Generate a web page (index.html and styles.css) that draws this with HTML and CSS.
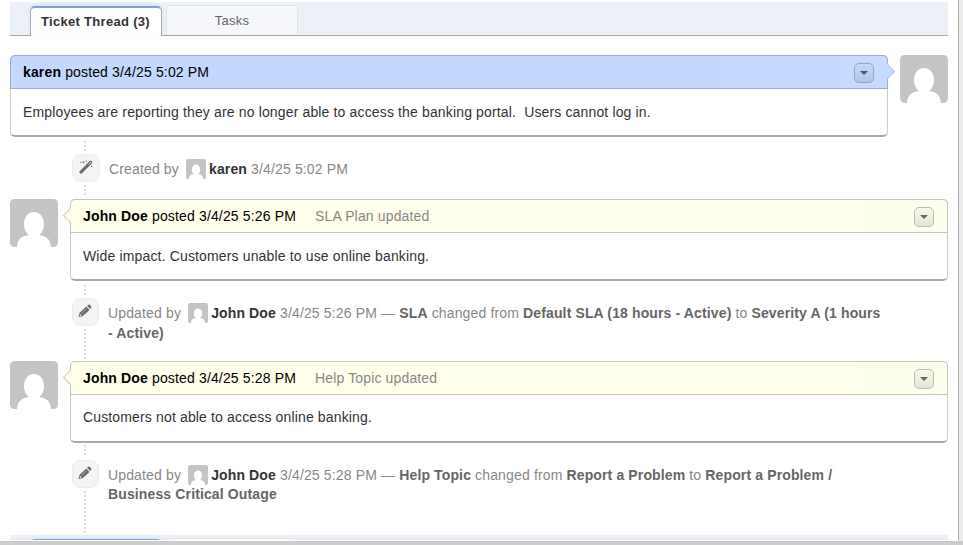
FILE: index.html
```html
<!DOCTYPE html>
<html lang="en">
<head>
<meta charset="utf-8">
<title>Ticket Thread</title>
<link rel="stylesheet" href="styles.css">
</head>
<body>
<svg class="defs" width="0" height="0" aria-hidden="true">
  <symbol id="person" viewBox="0 0 48 48">
    <path fill="#c4c4c4" d="M5 0H43Q48 0 48 5V43Q48 48 43 48H5Q0 48 0 43V5Q0 0 5 0Z"/>
    <path fill="#fff" d="M24 13C30 13 34 18 34 25C34 30 32 34 29 36C36 37 41 40 41 49H7C7 40 12 37 19 36C16 34 14 30 14 25C14 18 18 13 24 13Z"/>
  </symbol>
  <symbol id="pencil" viewBox="0 0 14 14">
    <path fill="#6c6c6c" d="M.5 13L1.6 8.8L8.3 2.5L11.5 5.9L4.6 12.2ZM9.1 1.8L10.4 .8Q11.2 .3 12 1.1L13.1 2.3Q13.8 3.2 13 4L12.2 5Z"/>
    <path stroke="#bbb" stroke-width=".7" d="M3.7 9L8.3 4.8"/>
    <path fill="#f4f4f4" d="M1.7 11.4L2.2 10L3.6 11.4L2.4 11.9Z"/>
  </symbol>
  <symbol id="wand" viewBox="0 0 14 14">
    <path fill="#6c6c6c" d="M0 12L10.7 1.1Q11.5 .4 12.3 1L13.1 1.8Q13.7 2.5 13 3.3L2.2 14Z"/>
    <path stroke="#e4e4e4" stroke-width=".9" d="M9.7 4.3L12 2"/>
    <path fill="#888" d="M1.3 1.7h1.4v1.2H1.3zM6.7 .5h1.3v1.2H6.7zM12 5.7h1.3v1.3H12zM4.5.7l.6 1 1.1.5-1.1.6-.6 1-.6-1-1.1-.6 1.1-.5z"/>
  </symbol>
</svg>
<div class="window">
  <main class="panel">
    <nav class="tabs">
      <div class="tab active">Ticket Thread (3)</div>
      <div class="tab">Tasks</div>
    </nav>
    <div class="thread">
      <article class="entry message">
        <div class="box">
          <header><b>karen</b>&nbsp;posted 3/4/25 5:02 PM<span class="more"></span></header>
          <div class="body">Employees are reporting they are no longer able to access the banking portal.&nbsp; Users cannot log in.</div>
        </div>
        <svg class="avatar"><use href="#person"/></svg>
      </article>
      <div class="event created">
        <div class="rail"><i class="lead"></i><span class="badge"><svg><use href="#wand"/></svg></span><i class="tail"></i></div>
        <p>Created by <svg class="mini"><use href="#person"/></svg><b class="who">karen</b> 3/4/25 5:02 PM</p>
      </div>
      <article class="entry note">
        <svg class="avatar"><use href="#person"/></svg>
        <div class="box">
          <header><b>John Doe</b>&nbsp;posted 3/4/25 5:26 PM<span class="title">SLA Plan updated</span><span class="more"></span></header>
          <div class="body">Wide impact. Customers unable to use online banking.</div>
        </div>
      </article>
      <div class="event sla">
        <div class="rail"><i class="lead"></i><span class="badge"><svg><use href="#pencil"/></svg></span><i class="tail"></i></div>
        <p>Updated by <svg class="mini"><use href="#person"/></svg><b class="who">John Doe</b> 3/4/25 5:26 PM — <b>SLA</b> changed from <b>Default SLA (18 hours - Active)</b> to <b>Severity A (1 hours<br>- Active)</b></p>
      </div>
      <article class="entry note last">
        <svg class="avatar"><use href="#person"/></svg>
        <div class="box">
          <header><b>John Doe</b>&nbsp;posted 3/4/25 5:28 PM<span class="title">Help Topic updated</span><span class="more"></span></header>
          <div class="body">Customers not able to access online banking.</div>
        </div>
      </article>
      <div class="event topic">
        <div class="rail"><i class="lead"></i><span class="badge"><svg><use href="#pencil"/></svg></span><i class="tail"></i></div>
        <p>Updated by <svg class="mini"><use href="#person"/></svg><b class="who">John Doe</b> 3/4/25 5:28 PM — <b>Help Topic</b> changed from <b>Report a Problem</b> to <b>Report a Problem /<br>Business Critical Outage</b></p>
      </div>
    </div>
    <div class="tabs next"><div class="tab active"></div><div class="tab"></div></div>
  </main>
</div>
</body>
</html>
```

FILE: styles.css
```css
* { box-sizing: border-box; }
body { margin: 0; height: 545px; overflow: hidden; background: #ededed; font: 14px/20px "Liberation Sans", Arial, sans-serif; letter-spacing: .147px; color: #333; }
.defs { display: none; }
.window { height: 545px; border-bottom: 4px solid #ccc; overflow: hidden; }
.panel { width: 959px; height: 541px; padding: 2px 10px 0; background: #fff; border-right: 1px solid #aaa; border-bottom: 1px solid #fff; overflow: hidden; }
.tabs { display: flex; gap: 4px; width: 938px; height: 34px; padding: 3px 0 0 20px; background: #ebf1f6; border-bottom: 1px solid #aaa; }
.tab { width: 132px; height: 30px; border: 1px solid #e2e4e8; border-bottom: 0; border-radius: 5px 5px 0 0; background: #f5f7fa; color: #666; font-size: 13px; line-height: 29px; letter-spacing: .3px; text-align: center; }
.tab.active { margin-top: 1px; height: 30px; background: #fff; border-color: #aaa; border-top: 2px solid #7aa3d6; color: #333; font-weight: bold; line-height: 28px; padding-right: 1px; box-shadow: 0 -1px 5px rgba(0,0,0,.06); }
.thread { padding-top: 19px; width: 938px; }
.entry { display: flex; gap: 12px; height: 82px; }
.avatar { width: 48px; height: 48px; flex: none; }
.box { position: relative; width: 878px; height: 82px; border: 1px solid #ccc; border-bottom: 2px solid #aaa; border-radius: 5px; background: #fff; }
.box header { display: flex; align-items: center; height: 34px; margin: -1px -1px 0; padding: 0 12px; border: 1px solid #c8c8b8; border-radius: 5px 5px 0 0; background: linear-gradient(90deg, #ffffeb 85%, #fdfdee); color: #000; }
.message .box header { background: linear-gradient(90deg, #c3d7ff 75%, #c7daff); border-color: #9aafd4; }
.title { margin-left: 19px; color: #888; }
.more { display: flex; width: 20px; height: 20px; margin-left: auto; margin-top: 1px; margin-right: 1px; border: 1px solid #bdbdae; border-radius: 5px; background: linear-gradient(#f9f9ea, #e5e5d7); align-items: center; justify-content: center; }
.more::before { content: ""; border: 4px solid transparent; border-top-color: #68685f; border-bottom: 0; }
.message .more { border-color: #93a8cf; background: linear-gradient(#c7d9fb, #b0c4ea); }
.message .more::before { border-top-color: #4e5868; }
.box::after { content: ""; position: absolute; top: 10px; left: -6px; width: 10px; height: 10px; border: 1px solid #ccccb8; border-width: 0 0 1px 1px; background: #ffffeb; transform: rotate(45deg); }
.message .box::after { left: auto; right: -6px; border-color: #b4c8ec; border-width: 1px 1px 0 0; background: #c7daff; }
.body { padding: 13px 12px; }
.last .body { padding-top: 12px; }
.event { display: flex; gap: 9px; padding-left: 62px; color: #888; }
.event p { margin: 22px 0 0; line-height: 20px; white-space: nowrap; }
.event b { color: #666; letter-spacing: .13px; }
.event .who { color: #333; }
.created { height: 62px; }
.sla { height: 80px; }
.topic { height: 92px; }
.event.topic p { margin-top: 23px; line-height: 19px; }
.rail { display: flex; flex-direction: column; width: 27px; }
.created .rail { width: 28px; }
.rail i { width: 2px; margin-left: 12px; background: repeating-linear-gradient(#ddd 0 2px, transparent 2px 4px); }
.lead { height: 10px; margin-top: 4px; }
.tail { flex: 1; margin-top: 3px; }
.created .tail { flex: none; height: 10px; }
.sla .tail { margin-bottom: 2px; }
.topic .lead { height: 12px; margin-top: 2px; }
.badge { display: flex; align-items: center; justify-content: center; height: 28px; margin-top: 3px; border: 1px solid #ececec; border-radius: 8px; background: #f4f4f4; }
.badge svg { width: 14px; height: 14px; margin: 0 1px 2px 0; }
.mini { width: 20px; height: 20px; margin: -2px 3px -5px; vertical-align: baseline; }
.next { padding-top: 3px; }
```
